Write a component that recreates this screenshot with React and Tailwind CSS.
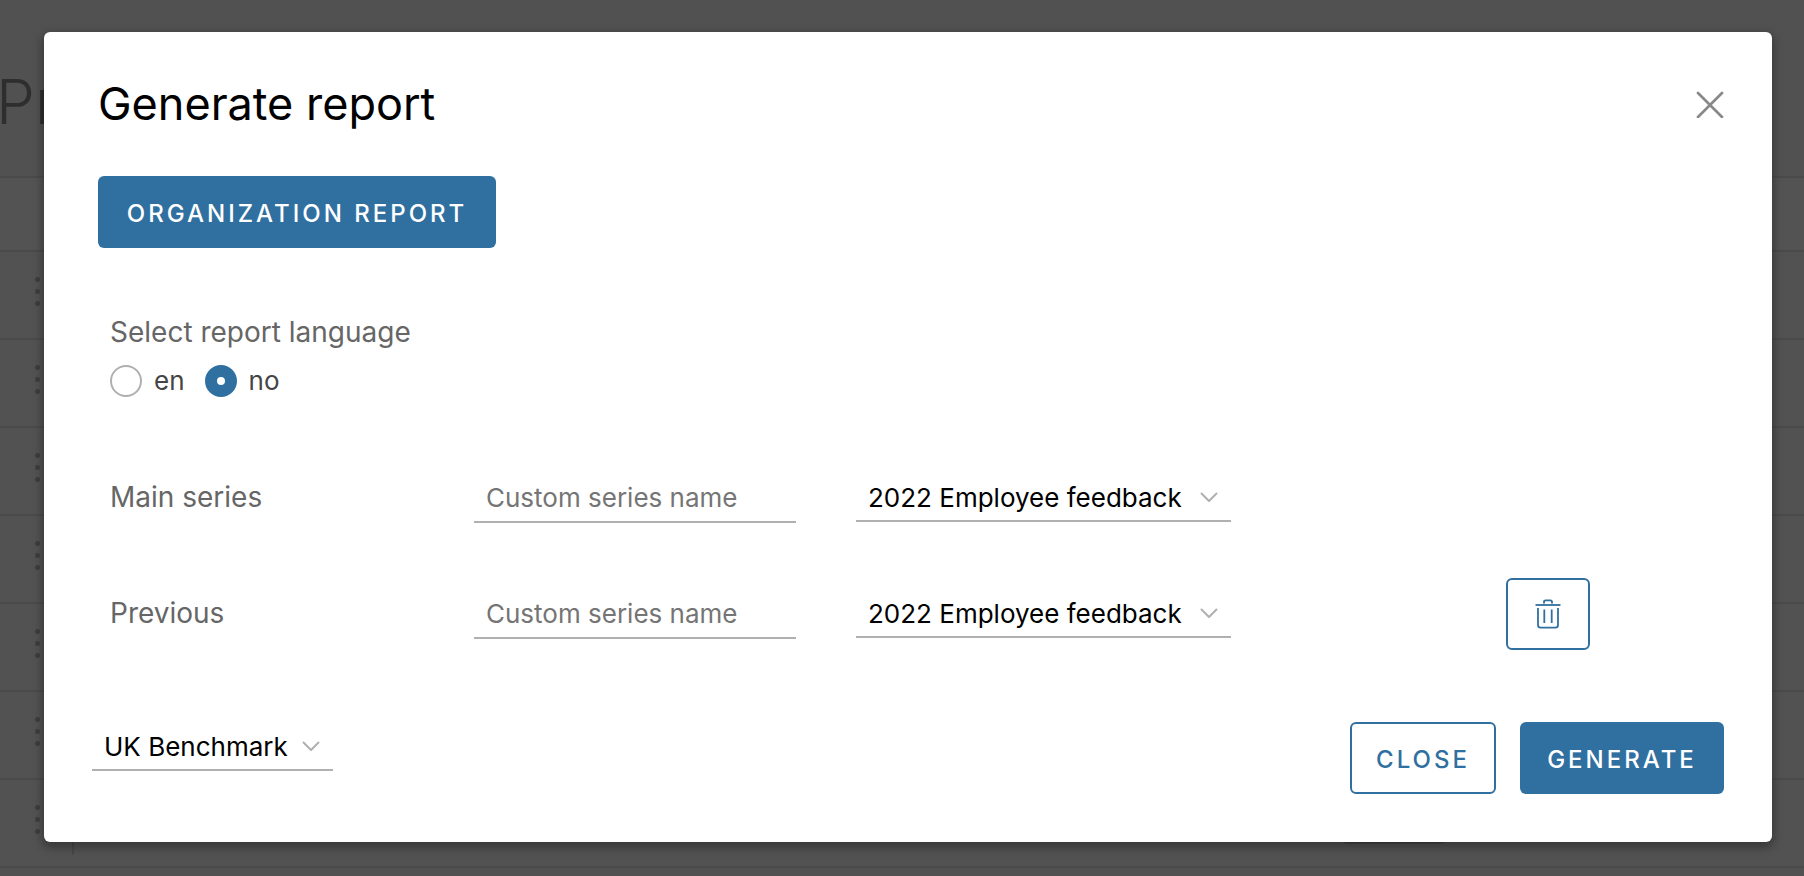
import { useState } from 'react';

const SERIES = ['Main series', 'Previous'];
const ROWS = [0, 1, 2, 3, 4, 5, 6];

function Chevron() {
  return (
    <svg
      className="pointer-events-none absolute right-3 top-1/2 h-5 w-5 -translate-y-1/2"
      viewBox="0 0 20 20"
      fill="none"
      stroke="#b0b0b0"
      strokeWidth="2"
      strokeLinecap="round"
      strokeLinejoin="round"
      aria-hidden="true"
    >
      <path d="M2.5 5.5 10 13 17.500 5.500" />
    </svg>
  );
}

function Select({ label, options, className }) {
  return (
    <div className={`relative ${className}`}>
      <select
        aria-label={label}
        className="h-12 w-full appearance-none border-b-2 border-[#b0b0b0] bg-white pl-3 pr-10 text-[26px] text-black outline-none"
      >
        {options.map((o) => (
          <option key={o}>{o}</option>
        ))}
      </select>
      <Chevron />
    </div>
  );
}

function Radio({ value, checked, onChange }) {
  return (
    <label className="flex items-center gap-3 text-[26px] leading-8 text-[#454545]">
      <input
        type="radio"
        name="language"
        value={value}
        checked={checked}
        onChange={onChange}
        className="h-8 w-8 appearance-none rounded-full border-2 border-[#b0b0b0] bg-white checked:border-12 checked:border-[#3070a0]"
      />
      {value}
    </label>
  );
}

function TrashIcon() {
  return (
    <svg className="h-[30px] w-[26px]" viewBox="0 0 26 30" fill="none" stroke="#3070a0" strokeWidth="1.8" aria-hidden="true">
      <path d="M.5 6h25" />
      <path d="M9 4.500V3q0-1.700 1.700-1.700h4.600Q17 1.300 17 3v1.500" />
      <path d="M3 9v17q0 2.600 2.600 2.600h14.800Q23 28.600 23 26V9" />
      <path d="M9.300 10.500v13.500M16.700 10.500v13.500" />
    </svg>
  );
}

function Backdrop() {
  return (
    <div className="absolute inset-0 overflow-hidden bg-[#515151]" aria-hidden="true">
      <div className="-ml-1 flex h-44 items-end pb-10 text-[62px] leading-[68px] font-light text-[#2e2e2e]">Pr</div>
      <div className="h-[74px] border-t-2 border-[#4a4a4a] bg-[#535353]" />
      {ROWS.map((r) => (
        <div key={r} className="flex h-[88px] items-center border-t-2 border-[#4a4a4a] bg-[#525252] pl-[35px]">
          <div className="flex flex-col gap-[7px] pb-2">
            <span className="h-[5px] w-[5px] rounded-full bg-[#3e3e3e]" />
            <span className="h-[5px] w-[5px] rounded-full bg-[#3e3e3e]" />
            <span className="h-[5px] w-[5px] rounded-full bg-[#3e3e3e]" />
          </div>
          {r === 6 && <div className="ml-8 h-16 w-[2px] bg-[#484848]" />}
          {r === 6 && <div className="ml-auto mr-[358px] h-16 w-[104px] self-start rounded-md bg-[#444]" />}
        </div>
      ))}
      <div className="h-2 border-t-2 border-[#4a4a4a]" />
    </div>
  );
}

export default function App() {
  const [lang, setLang] = useState('no');
  return (
    <div className="relative min-h-screen pb-8 pl-11 pr-8 pt-8 font-['Inter',sans-serif]">
      <Backdrop />
      <section
        role="dialog"
        aria-labelledby="dialog-title"
        className="relative rounded-md bg-white px-12 pb-12 pt-11 shadow-[0_4px_10px_2px_rgba(0,0,0,0.3)]"
      >
        <header className="flex items-center justify-between pl-1.5">
          <h1 id="dialog-title" className="text-[45px] font-normal leading-[56px] text-black">
            Generate report
          </h1>
          <button type="button" aria-label="Close dialog">
            <svg className="h-7 w-7" viewBox="0 0 28 28" fill="none" stroke="#888" strokeWidth="2.700" strokeLinecap="round" aria-hidden="true">
              <path d="M2 3 26 27M26 3 2 27" />
            </svg>
          </button>
        </header>

        <div className="pl-1.5 pt-11">
          <button type="button" className="h-[72px] min-w-[398px] rounded-md bg-[#3070a0] px-6 pt-1 text-2xl font-medium tracking-[3px] text-white">
            ORGANIZATION REPORT
          </button>
        </div>

        <fieldset className="pl-[18px] pt-[66px]">
          <legend className="contents">
            <span className="block text-[28px] leading-9 text-[#666]">Select report language</span>
          </legend>
          <div className="flex gap-5 pt-[15px]">
            <Radio value="en" checked={lang === 'en'} onChange={() => setLang('en')} />
            <Radio value="no" checked={lang === 'no'} onChange={() => setLang('no')} />
          </div>
        </fieldset>

        <div className="flex flex-col gap-11 pl-[18px] pt-[65px]">
          {SERIES.map((name, i) => (
            <div key={name} className="grid h-[72px] grid-cols-[364fr_382fr_650fr_218fr] items-center">
              <label htmlFor={`series-${i}`} className="pb-0.5 text-[28px] leading-9 text-[#666]">
                {name}
              </label>
              <div className="pr-[60px]">
                <input
                  id={`series-${i}`}
                  type="text"
                  placeholder="Custom series name"
                  className="h-[50px] w-full border-b-2 border-[#b0b0b0] px-3 text-[26px] outline-none placeholder:text-[#757575]"
                />
              </div>
              <Select label={`${name} survey`} options={['2022 Employee feedback']} className="w-[375px]" />
              {i === 1 && (
                <button
                  type="button"
                  aria-label="Remove series"
                  className="flex h-[72px] w-[84px] items-center justify-center rounded-md border-2 border-[#3070a0]"
                >
                  <TrashIcon />
                </button>
              )}
            </div>
          ))}
        </div>

        <footer className="flex items-start justify-between pt-[72px]">
          <Select label="Benchmark" options={['UK Benchmark']} className="mt-px w-[241px]" />
          <div className="flex gap-6">
            <button type="button" className="h-[72px] min-w-[146px] rounded-md border-2 border-[#3070a0] px-5 pt-1 text-2xl font-medium tracking-[3px] text-[#3070a0]">
              CLOSE
            </button>
            <button type="button" className="h-[72px] min-w-[204px] rounded-md bg-[#3070a0] px-6 pt-1 text-2xl font-medium tracking-[3px] text-white">
              GENERATE
            </button>
          </div>
        </footer>
      </section>
    </div>
  );
}
